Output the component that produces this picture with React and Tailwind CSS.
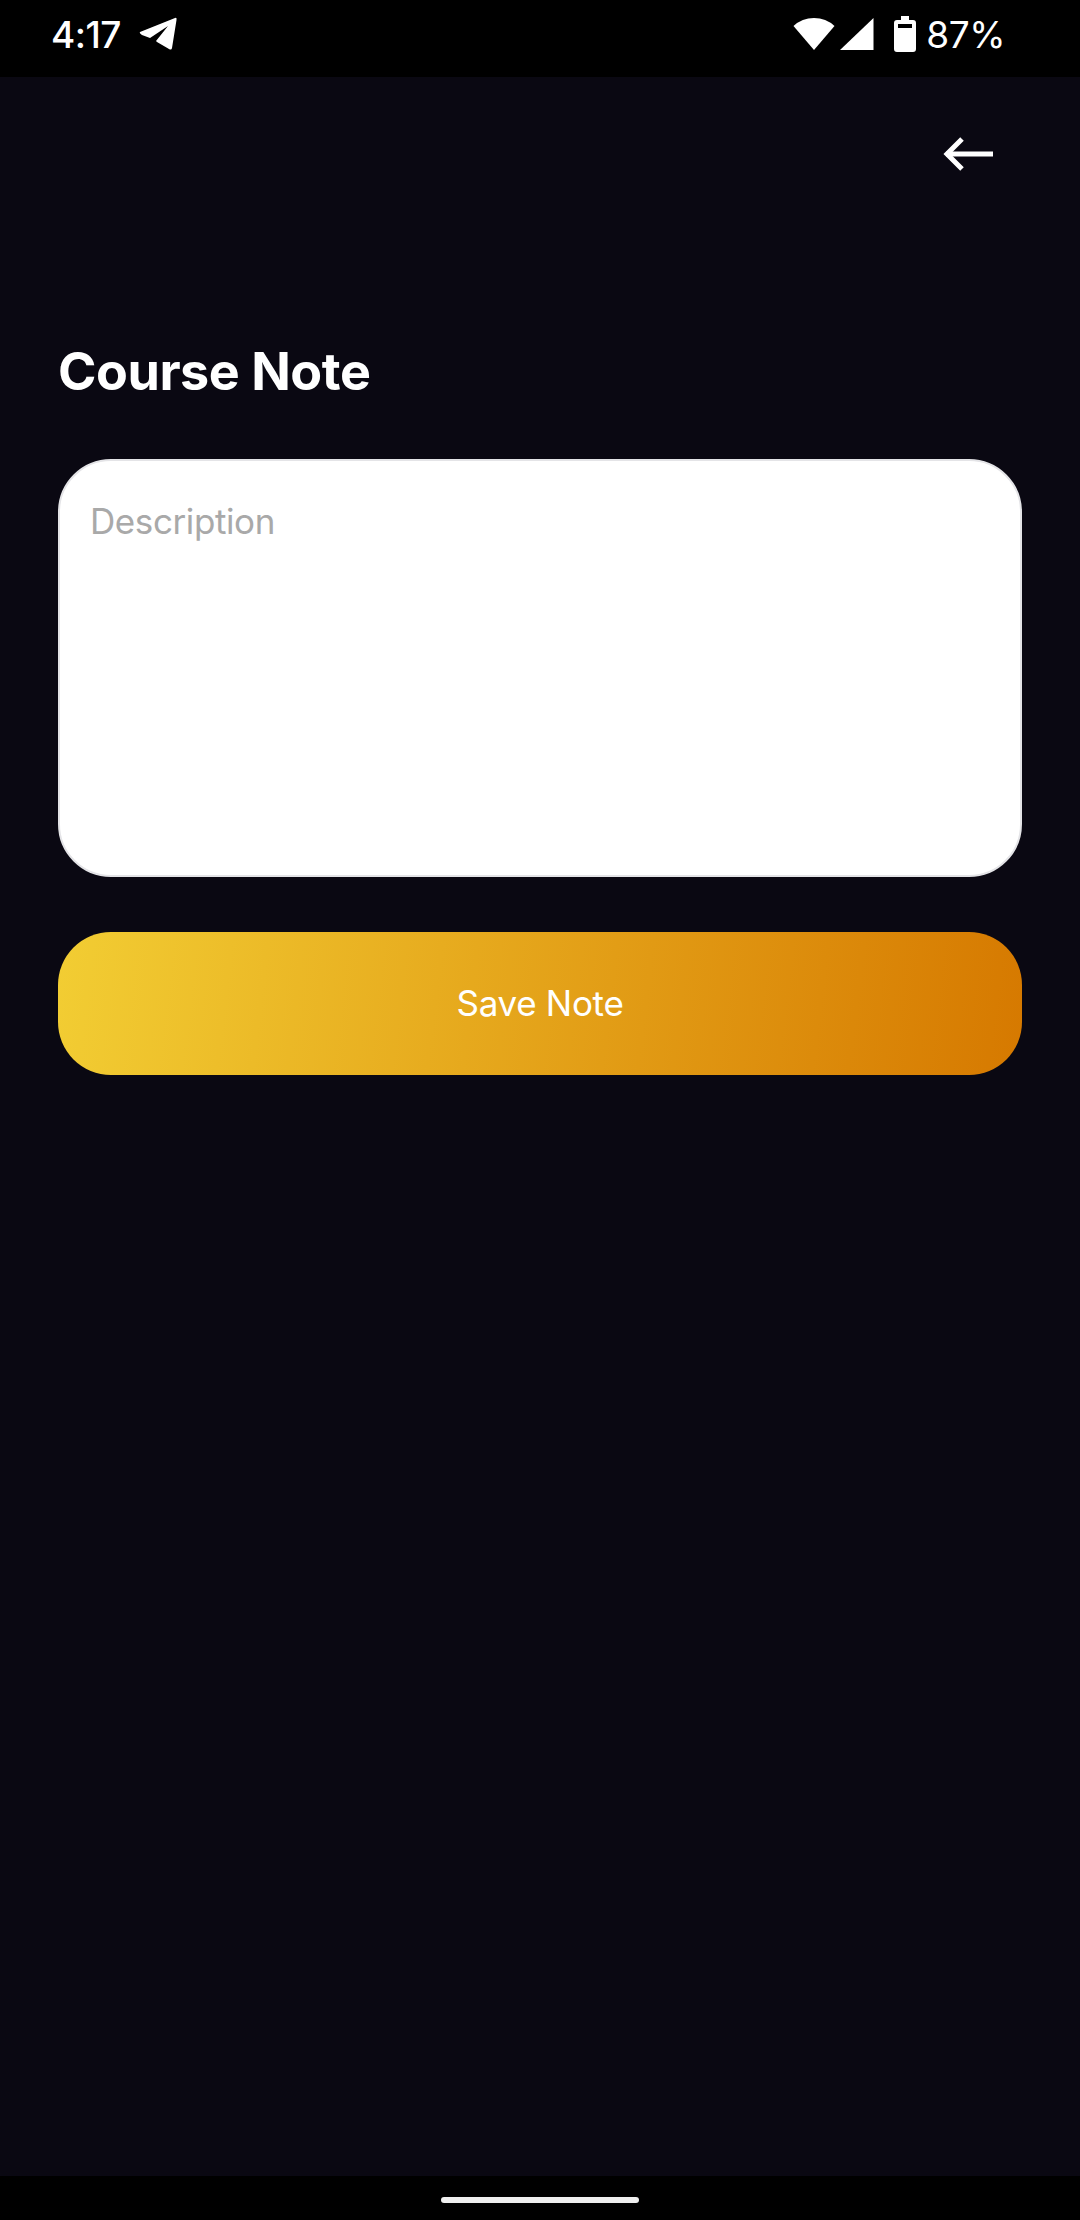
export default function App() {
  return (
    <div className="w-[1080px] h-[2220px] flex flex-col bg-[#0a0812] font-['Inter',sans-serif] text-white overflow-hidden">
      <div className="h-[77px] bg-black flex items-center justify-between pl-[51px] pr-[75px] pb-[9px]">
        <div className="flex items-center gap-[18px]">
          <span className="text-[37px] font-medium leading-none tracking-[-0.5px]">4:17</span>
          <svg width="38" height="34" viewBox="0 0 38 34" fill="white">
            <path d="M1 15 L36 1 Q38 0 37.5 3 L33 31 Q32.5 33.5 30 32 L18 25 L17 24 L29 9 L11 21 L3 18 Q0 16 1 15 Z" />
          </svg>
        </div>
        <div className="flex items-center">
          <svg width="42" height="34" viewBox="0 0 42 34" fill="white" className="mr-[4px]">
            <path d="M21 33 L0.5 9 Q9 1 21 1 Q33 1 41.5 9 Z" />
          </svg>
          <svg width="35" height="34" viewBox="0 0 35 34" fill="white" className="mr-[20px]">
            <path d="M34.5 1 V33 H1 Z" />
          </svg>
          <svg width="22" height="36" viewBox="0 0 22 36" fill="white" className="mr-[10px]">
            <path fillRule="evenodd" d="M7 0 H15 V4 H19 Q22 4 22 7 V33 Q22 36 19 36 H3 Q0 36 0 33 V7 Q0 4 3 4 H7 Z M4 8 V12 H18 V8 Z" />
          </svg>
          <span className="text-[37px] leading-none tracking-[-0.5px]">87%</span>
        </div>
      </div>

      <div className="flex-1 flex flex-col px-[58px]">
        <div className="flex justify-end pt-[60px] pr-[29px]">
          <svg width="50" height="34" viewBox="0 0 50 34" fill="none" stroke="white" strokeWidth="5">
            <path d="M50 17 H3" />
            <path d="M19 2 L4 17 L19 32" />
          </svg>
        </div>
        <h1 className="mt-[171px] text-[52px] leading-[60px] font-bold tracking-[-0.45px]">Course Note</h1>
        <div className="mt-[57px] h-[418px] rounded-[53px] bg-white border-2 border-[#e4e4e7] px-[30px] py-[38px]">
          <p className="text-[35px] leading-[44px] tracking-[-0.4px] text-[#a9a9a9]">Description</p>
        </div>
        <button className="mt-[55px] h-[143px] rounded-[53px] bg-[linear-gradient(97deg,#f2cd33,#d67900)] text-[35px] tracking-[-0.3px] text-white flex items-center justify-center">
          Save Note
        </button>
      </div>

      <div className="h-[44px] bg-black flex justify-center pt-[21px]">
        <div className="w-[198px] h-[6px] rounded-full bg-[#efefef]" />
      </div>
    </div>
  )
}
